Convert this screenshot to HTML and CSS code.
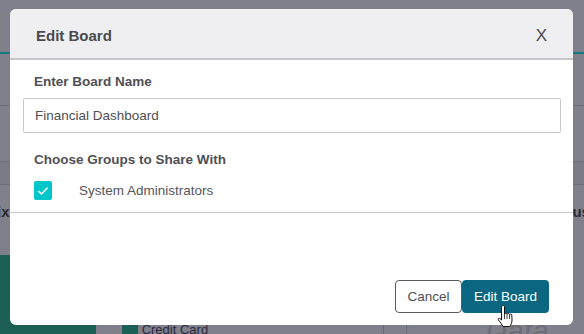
FILE: index.html
```html
<!DOCTYPE html>
<html lang="en">
<head>
  <meta charset="UTF-8" />
  <title>Edit Board</title>
  <link rel="stylesheet" href="styles.css">
</head>
<body>

  <!-- dimmed dashboard behind the modal -->
  <div class="page">
    <div class="topbar"></div>
    <div class="row row-tall"></div>
    <div class="row row-mid"></div>
    <div class="row row-band"></div>
    <div class="row-labels">
      <span>ix</span>
      <span>us</span>
    </div>
    <div class="cards">
      <div class="green-card"></div>
      <div class="legend">
        <span class="swatch"></span>
        <span class="legend-text">Credit Card</span>
      </div>
      <div class="vline"></div>
      <div class="vline"></div>
      <div class="big-title">Data Cl</div>
    </div>
  </div>

  <!-- Edit Board modal -->
  <div class="modal">
    <div class="modal-header">
      <h3>Edit Board</h3>
      <span class="close">X</span>
    </div>
    <div class="modal-body">
      <label class="field-label">Enter Board Name</label>
      <input class="text-input" type="text" value="Financial Dashboard">
      <label class="field-label groups-label">Choose Groups to Share With</label>
      <div class="check-row">
        <span class="checkbox">
          <svg width="12" height="10" viewBox="0 0 12 10"><path d="M1.5 5.2 L4.5 8 L10.5 1.8" fill="none" stroke="#fff" stroke-width="1.6"/></svg>
        </span>
        <span class="check-text">System Administrators</span>
      </div>
    </div>
    <div class="modal-footer">
      <button class="btn btn-cancel">Cancel</button>
      <button class="btn btn-primary">Edit Board</button>
    </div>
  </div>

  <!-- mouse pointer -->
  <svg class="pointer" width="18" height="24" viewBox="0 0 18 24">
    <path d="M6 1.5 C7 1.5 7.5 2 7.5 3 L7.5 10 C7.8 9 9.8 9 10 10 C10.3 9.2 12.2 9.2 12.5 10.4 C12.8 9.8 14.6 9.9 14.8 11 L15 16 C15 19 13.8 21 12.8 22.5 L6 22.5 C5 21 3.5 18.5 1.5 16 C0.8 15 1.6 13.8 2.8 14.4 L4.5 16 L4.5 3 C4.5 2 5 1.5 6 1.5 Z" fill="#fff" stroke="#111" stroke-width="1"/>
    <path d="M7.5 10 L7.5 15 M10 10 L10 15 M12.5 10.5 L12.5 15" stroke="#111" stroke-width="0.8"/>
  </svg>

</body>
</html>
```

FILE: styles.css
```css
body {
  margin: 0;
  font-family: "Liberation Sans", Arial, sans-serif;
  background: #80808a;
  overflow: hidden;
}

.page {
  width: 584px;
  height: 334px;
}

.topbar {
  height: 52px;
  border-bottom: 2px solid #137b80;
}

.row {
  border-bottom: 1px solid #6e6e77;
}

.row-tall {
  height: 51px;
}

.row-mid {
  height: 55px;
}

.row-band {
  height: 22px;
  background: #7b7b85;
}

.row-labels {
  display: flex;
  justify-content: space-between;
  height: 70px;
  padding-top: 18px;
  box-sizing: border-box;
  font-weight: bold;
  font-size: 15px;
  color: #2a2a33;
  margin-left: -3px;
  margin-right: -6px;
}

.cards {
  display: flex;
  align-items: flex-end;
  height: 80px;
}

.green-card {
  width: 97px;
  height: 80px;
  background: #1c5f55;
  border-top-right-radius: 40px;
}

.legend {
  display: flex;
  align-items: flex-end;
  width: 240px;
  margin-left: 26px;
  height: 14px;
}

.swatch {
  width: 16px;
  height: 14px;
  background: #1c5f55;
}

.legend-text {
  margin-left: 4px;
  font-size: 13px;
  color: #2a2a40;
  line-height: 11px;
}

.vline {
  width: 1px;
  height: 10px;
  background: #6a6a73;
  margin-left: 22px;
}

.legend + .vline {
  margin-left: 25px;
}

.big-title {
  margin-left: 78px;
  font-size: 30px;
  font-style: italic;
  color: #6d6d76;
  line-height: 12px;
  height: 10px;
  overflow: hidden;
}

/* modal */
.modal {
  position: absolute;
  left: 10px;
  top: 9px;
  width: 563px;
  height: 316px;
  background: #fff;
  border-radius: 6px;
  overflow: hidden;
  display: flex;
  flex-direction: column;
}

.modal-header {
  display: flex;
  align-items: center;
  justify-content: space-between;
  height: 51px;
  padding: 4px 26px 0 26px;
  box-sizing: border-box;
  background: #efeff1;
  border-bottom: 2px solid #c6c6c8;
}

.modal-header h3 {
  margin: 0;
  font-size: 15px;
  color: #4a4a4f;
}

.close {
  font-size: 17px;
  color: #4a4a4f;
}

.modal-body {
  padding: 12px 12px 12px 13px;
  border-bottom: 1px solid #c9c9cc;
}

.field-label {
  display: block;
  padding-left: 11px;
  font-size: 13.5px;
  font-weight: bold;
  color: #4f4f55;
  line-height: 20px;
}

.text-input {
  display: block;
  width: 100%;
  height: 35px;
  margin-top: 6px;
  box-sizing: border-box;
  border: 1px solid #c8c8cb;
  border-radius: 2px;
  padding: 0 11px;
  font-family: "Liberation Sans", Arial, sans-serif;
  font-size: 13.5px;
  color: #4f4f55;
}

.groups-label {
  margin-top: 17px;
}

.check-row {
  display: flex;
  align-items: center;
  margin-top: 11px;
  padding-left: 11px;
}

.checkbox {
  width: 18px;
  height: 19px;
  border-radius: 2px;
  background: #00c6ca;
  display: flex;
  align-items: center;
  justify-content: center;
}

.check-text {
  margin-left: 27px;
  font-size: 13.5px;
  color: #55555b;
}

.modal-footer {
  flex: 1;
  display: flex;
  justify-content: flex-end;
  align-items: flex-end;
  padding: 0 24px 12px 0;
}

.btn {
  height: 33px;
  font-family: "Liberation Sans", Arial, sans-serif;
  font-size: 13.5px;
  border-radius: 4px;
  cursor: pointer;
}

.btn-cancel {
  width: 67px;
  background: #fff;
  border: 1px solid #5a5a60;
  color: #4f4f55;
}

.btn-primary {
  width: 87px;
  background: #0a6681;
  border: none;
  color: #fff;
}

.pointer {
  position: absolute;
  left: 497px;
  top: 304px;
}
```
